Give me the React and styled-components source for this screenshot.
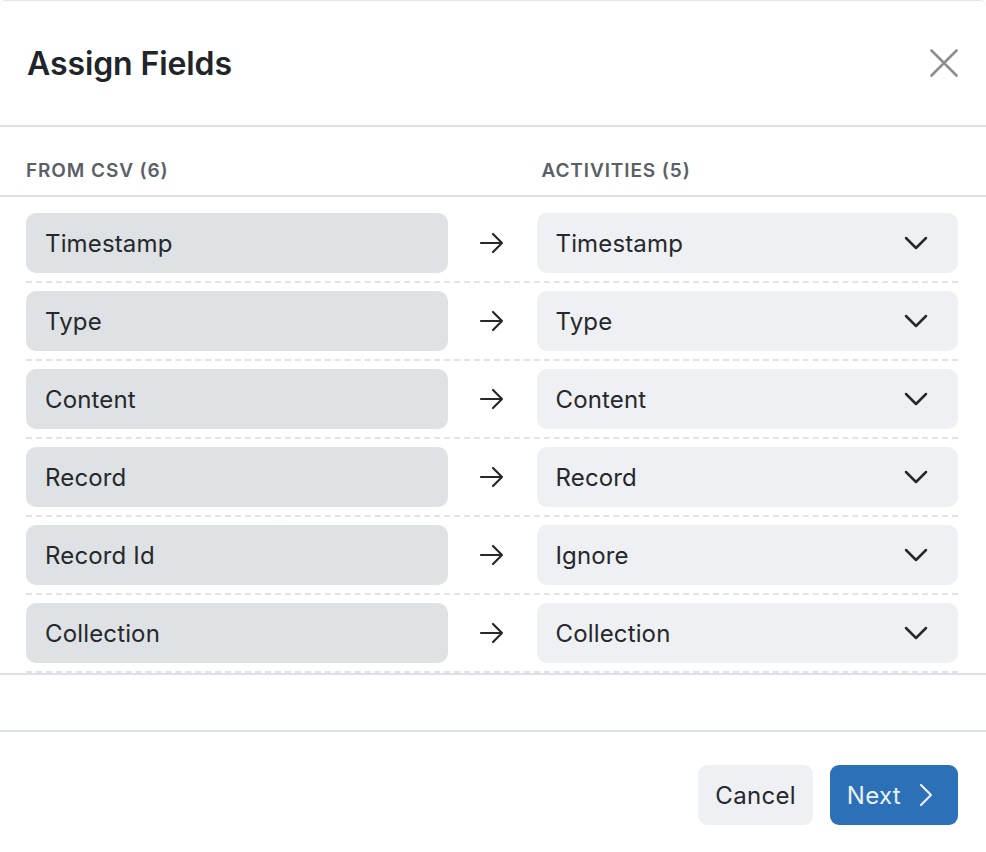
import React from "react";
import styled, { createGlobalStyle } from "styled-components";

const Global = createGlobalStyle`
  html, body { margin: 0; padding: 0; background: #ffffff; }
  body { font-family: Inter, "Noto Sans", sans-serif; color: #212529; -webkit-font-smoothing: antialiased; }
  * { box-sizing: border-box; }
`;

const Modal = styled.div`
  width: 986px;
  height: 852px;
  background: #fff;
  border-top: 1px solid #e3e5e8;
  border-radius: 6px 6px 0 0;
  display: flex;
  flex-direction: column;
`;

const Header = styled.header`
  height: 126px;
  flex: none;
  display: flex;
  align-items: center;
  justify-content: space-between;
  padding: 0 28px 0 27px;
  border-bottom: 2px solid #dde0e4;
`;

const Title = styled.h1`
  margin: 0;
  font-size: 32px;
  font-weight: 600;
  letter-spacing: -0.1px;
  color: #212529;
`;

const CloseButton = styled.button`
  border: 0;
  background: none;
  padding: 0;
  width: 28px;
  height: 28px;
  display: flex;
  align-items: center;
  justify-content: center;
  cursor: pointer;
  margin-top: -1px;
`;

const Body = styled.div`
  display: flex;
  flex-direction: column;
  border-bottom: 2px solid #dde0e4;
`;

const ColumnHeads = styled.div`
  display: grid;
  grid-template-columns: 1fr 89px 1fr;
  padding: 18px 28px 0 26px;
  height: 70px;
  align-items: center;
  border-bottom: 2px solid #dde0e4;
`;

const ColumnHead = styled.div`
  font-size: 19px;
  font-weight: 600;
  letter-spacing: 0.9px;
  color: #5b6067;
  padding-left: ${(p) => p.$offset || 0}px;
`;

const List = styled.div`
  padding: 8px 28px 0 26px;
`;

const Row = styled.div`
  display: grid;
  grid-template-columns: 1fr 89px 1fr;
  align-items: center;
  padding: 8px 0 8px;
  border-bottom: 2px dashed #e1e3e6;
`;

const Field = styled.div`
  height: 60px;
  border-radius: 10px;
  background: ${(p) => (p.$select ? "#eff0f3" : "#dfe2e5")};
  display: flex;
  align-items: center;
  justify-content: space-between;
  padding: 0 30px 0 19px;
  font-size: 24px;
  letter-spacing: 0.15px;
  color: #25282c;
`;

const ArrowCell = styled.div`
  display: flex;
  justify-content: center;
  align-items: center;
`;

const Spacer = styled.div`
  height: 57px;
  flex: none;
  border-bottom: 2px solid #dde0e4;
`;

const Footer = styled.footer`
  display: flex;
  justify-content: flex-end;
  gap: 17px;
  padding: 33px 28px 0 0;
`;

const Button = styled.button`
  height: 60px;
  border: 0;
  border-radius: 9px;
  font-family: inherit;
  font-size: 24px;
  letter-spacing: 0.3px;
  display: flex;
  align-items: center;
  gap: 18px;
  padding: 0 ${(p) => (p.$primary ? "25px" : "17px")} 0 17px;
  background: ${(p) => (p.$primary ? "#2c70b8" : "#eff0f3")};
  color: ${(p) => (p.$primary ? "#e9f0f8" : "#25282c")};
  cursor: pointer;
`;

const rows = [
  ["Timestamp", "Timestamp"],
  ["Type", "Type"],
  ["Content", "Content"],
  ["Record", "Record"],
  ["Record Id", "Ignore"],
  ["Collection", "Collection"],
];

const XIcon = () => (
  <svg width="28" height="28" viewBox="0 0 28 28" fill="none" stroke="#8b8f94" strokeWidth="2.6" strokeLinecap="round">
    <path d="M1.5 1.5 L26.5 26.5 M26.5 1.5 L1.5 26.5" />
  </svg>
);

const ArrowIcon = () => (
  <svg width="26" height="22" viewBox="0 0 26 22" fill="none" stroke="#25282c" strokeWidth="2.2" strokeLinecap="round" strokeLinejoin="round">
    <path d="M2 11 H23 M14 2 L23 11 L14 20" />
  </svg>
);

const ChevronDown = () => (
  <svg width="24" height="14" viewBox="0 0 24 14" fill="none" stroke="#25282c" strokeWidth="2.5" strokeLinecap="round" strokeLinejoin="round">
    <path d="M2 2 L12 12 L22 2" />
  </svg>
);

const ChevronRight = () => (
  <svg width="14" height="24" viewBox="0 0 14 24" fill="none" stroke="#e9f0f8" strokeWidth="2.2" strokeLinecap="round" strokeLinejoin="round">
    <path d="M2 2 L12 12 L2 22" />
  </svg>
);

export default function App() {
  return (
    <>
      <Global />
      <Modal>
        <Header>
          <Title>Assign Fields</Title>
          <CloseButton aria-label="Close">
            <XIcon />
          </CloseButton>
        </Header>
        <Body>
          <ColumnHeads>
            <ColumnHead>FROM CSV (6)</ColumnHead>
            <div />
            <ColumnHead $offset={5}>ACTIVITIES (5)</ColumnHead>
          </ColumnHeads>
          <List>
            {rows.map(([from, to]) => (
              <Row key={from}>
                <Field>{from}</Field>
                <ArrowCell>
                  <ArrowIcon />
                </ArrowCell>
                <Field $select>
                  <span>{to}</span>
                  <ChevronDown />
                </Field>
              </Row>
            ))}
          </List>
        </Body>
        <Spacer />
        <Footer>
          <Button>Cancel</Button>
          <Button $primary>
            Next
            <ChevronRight />
          </Button>
        </Footer>
      </Modal>
    </>
  );
}
